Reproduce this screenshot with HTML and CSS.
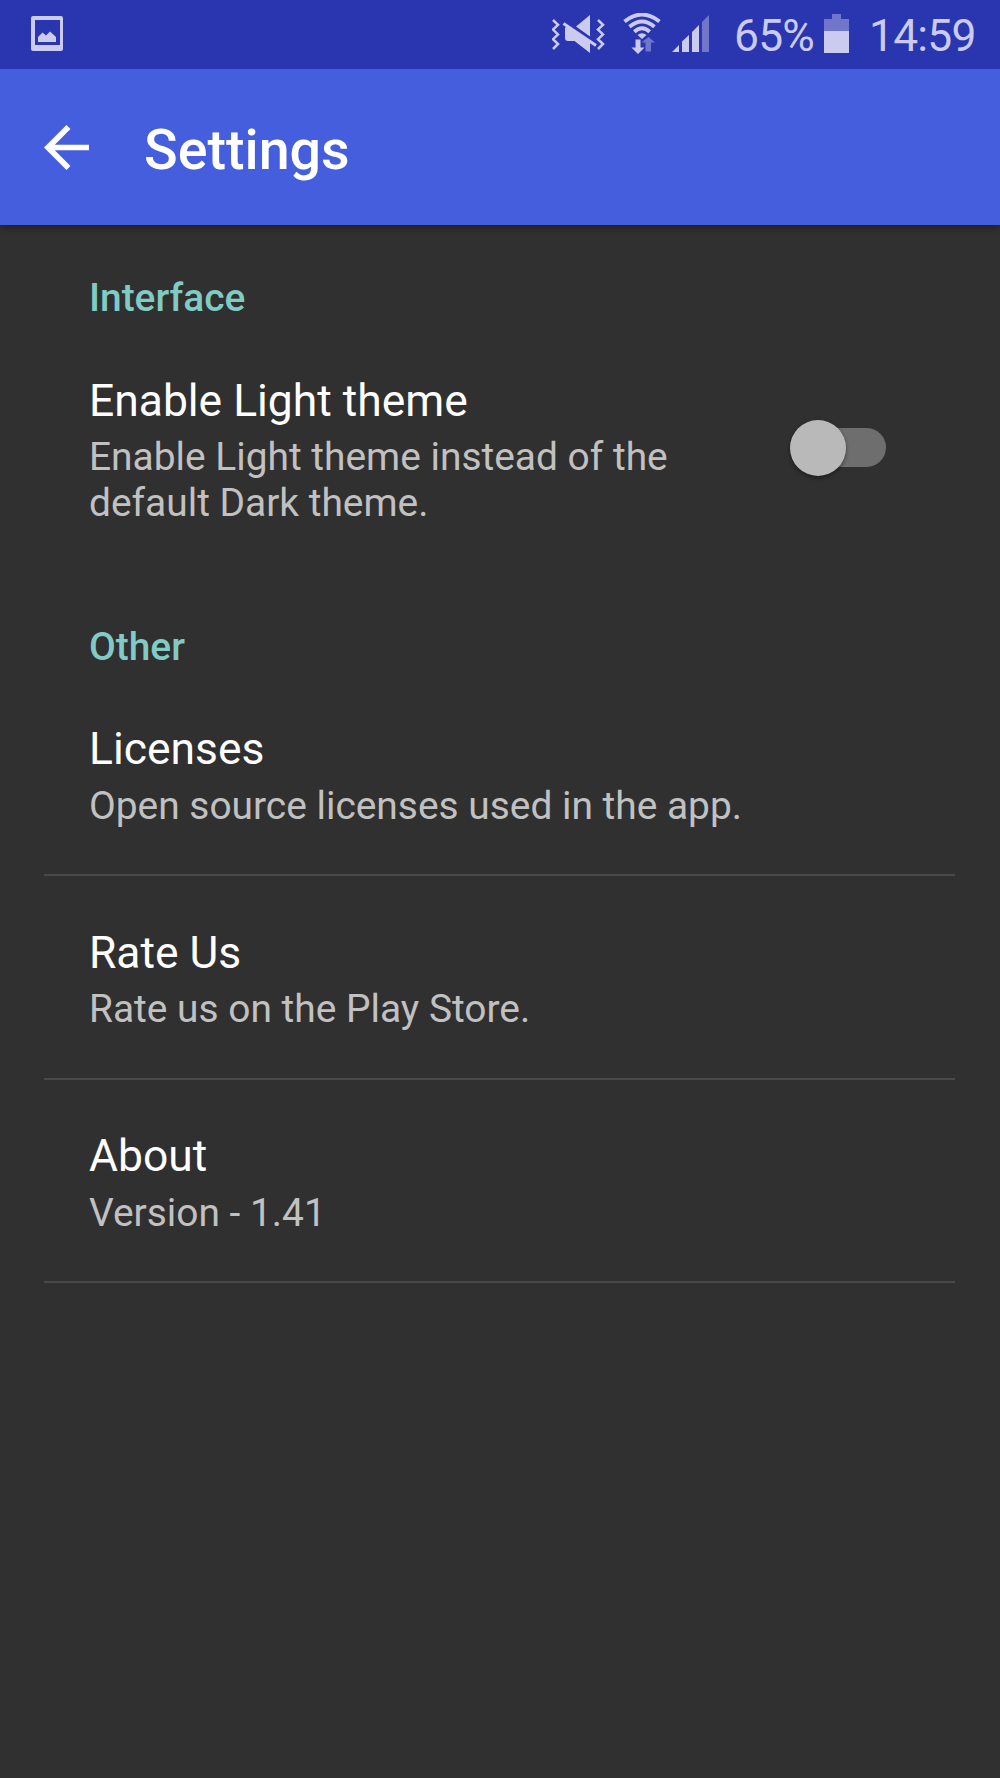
FILE: index.html
```html
<!DOCTYPE html>
<html lang="en">
<head>
    <meta charset="UTF-8">
    <meta name="viewport" content="width=device-width, initial-scale=1.0">
    <title>Settings</title>
    <link rel="stylesheet" href="styles.css">
</head>
<body>
    <div class="status-bar">
        <svg class="icon-picture" width="32" height="36" viewBox="0 0 32 36">
            <path fill-rule="evenodd" d="M2 0h28q2 0 2 2v31q0 2-2 2H2q-2 0-2-2V2q0-2 2-2zM4 4v25h25V4z"/>
            <path d="M7 26v-5l4.500-4.500 3.500 3L19 15.500l6 5.500v5z"/>
        </svg>
        <div class="status-right">
            <svg class="icon-mute" width="54" height="40" viewBox="0 0 54 40">
                <path class="wave" d="M1 5l5 4.800-5 4.800 5 4.800-5 4.800 5 4.800-5 5M46 5l5 4.800-5 4.800 5 4.800-5 4.800 5 4.800-5 5"/>
                <path d="M24 11.500L38 0v21.500zM15 11.500L38 27v11L22.500 26H16q-3 0-3-3v-9.500q0-2 2-2z"/>
                <path class="slash" d="M11.500 8.500L44 30.500"/>
            </svg>
            <svg class="icon-wifi" width="38" height="41" viewBox="0 0 38 41">
                <g class="arcs">
                    <path d="M1.500 8.500Q19-5.500 36.500 8.500"/>
                    <path d="M6.500 13.700Q19 3.300 31.500 13.700"/>
                    <path d="M11.300 18.700Q19 12 26.700 18.700"/>
                </g>
                <path d="M14.500 22q4.500-3.500 9 0L19 26z"/>
                <path d="M12.500 26.500h5v8h4L15 41l-6.500-6.500h4z"/>
                <path class="dim" d="M22.500 38.500v-9h-4L25.500 24l6.500 5.500h-4v9z"/>
            </svg>
            <svg class="icon-signal" width="38" height="38" viewBox="0 0 38 38">
                <path d="M0 37l7-7v7zM10 37V26.500l7-6.500v17zM20 37V17l7-7v27z"/>
                <path class="dim" d="M30 37V7l7-7v37z"/>
            </svg>
            <span class="battery-level">65%</span>
            <svg class="icon-battery" width="25" height="39" viewBox="0 0 25 39">
                <path class="dim" d="M8 0h9v5h8v12H0V5h8z"/>
                <path d="M0 17h25v22H0z"/>
            </svg>
            <span class="clock">14:59</span>
        </div>
    </div>

    <header class="toolbar">
        <svg class="back" width="45" height="45" viewBox="4 4 16 16">
            <path d="M20 11H7.830l5.590-5.590L12 4l-8 8 8 8 1.410-1.410L7.830 13H20v-2z"/>
        </svg>
        <h1>Settings</h1>
    </header>

    <main class="settings">
        <h2>Interface</h2>
        <div class="pref pref-switch">
            <div class="pref-text">
                <div class="title">Enable Light theme</div>
                <div class="summary">Enable Light theme instead of the default Dark theme.</div>
            </div>
            <div class="switch"><div class="thumb"></div></div>
        </div>

        <h2>Other</h2>
        <div class="pref">
            <div class="title">Licenses</div>
            <div class="summary">Open source licenses used in the app.</div>
        </div>
        <div class="pref">
            <div class="title">Rate Us</div>
            <div class="summary">Rate us on the Play Store.</div>
        </div>
        <div class="pref">
            <div class="title">About</div>
            <div class="summary">Version - 1.41</div>
        </div>
    </main>
</body>
</html>
```
FILE: styles.css
```css
* {
    margin: 0;
    padding: 0;
    box-sizing: border-box;
}

body {
    font-family: Roboto, sans-serif;
    background-color: #303030;
    color: #fff;
    min-height: 1778px;
}

svg {
    display: block;
    flex: none;
}

/* Status bar */
.status-bar {
    position: relative;
    z-index: 1;
    display: flex;
    justify-content: space-between;
    height: 69px;
    padding: 0 24px 0 31px;
    background-color: #2a35b0;
    color: #cacbef;
    fill: #cacbef;
}

.status-right {
    display: flex;
}

.dim {
    fill: #7077cb;
}

.icon-picture {
    margin-top: 16px;
}

.icon-mute {
    margin-top: 15px;
}

.wave {
    fill: none;
    stroke: #cacbef;
    stroke-width: 2.5;
}

.slash {
    stroke: #cacbef;
    stroke-width: 3;
}

.icon-wifi {
    margin: 13px 0 0 17px;
}

.arcs {
    fill: none;
    stroke: #cacbef;
    stroke-width: 3.8;
}

.icon-signal {
    margin: 15px 0 0 11px;
}

.battery-level,
.clock {
    font-size: 44.4px;
    line-height: 53px;
    margin-top: 10px;
    font-weight: 400;
    letter-spacing: -0.8px;
    white-space: nowrap;
}

.battery-level {
    width: 81px;
    margin-left: 24px;
}

.icon-battery {
    margin: 14px 0 0 9px;
}

.clock {
    width: 107px;
    margin-left: 20px;
}

/* Toolbar */
.toolbar {
    position: relative;
    display: flex;
    align-items: center;
    height: 156px;
    padding-left: 44px;
    background-color: #455ede;
    box-shadow: 0 2px 8px rgba(0, 0, 0, 0.4);
}

.back {
    fill: #fff;
}

.toolbar h1 {
    margin: 6px 0 0 55px;
    font-size: 55.6px;
    font-weight: 500;
    line-height: 65px;
}

/* Preferences */
.settings {
    padding: 49.5px 45px 0 44px;
}

.settings h2 {
    padding-left: 45px;
    font-size: 38.9px;
    font-weight: 500;
    line-height: 45.6px;
    color: #80cbc4;
}

.pref {
    padding: 50.4px 45px 46.2px;
    border-bottom: 2px solid #494949;
}

.settings h2 + .pref {
    padding-top: 54.2px;
}

.settings h2 + .pref-switch {
    padding-top: 55px;
}

.pref-switch {
    display: flex;
    align-items: center;
    justify-content: space-between;
    border-bottom: none;
}

.settings .pref-switch {
    padding-right: 69px;
    padding-bottom: 98px;
}

.pref-text {
    width: 620px;
}

.title {
    font-size: 44.4px;
    line-height: 52px;
}

.summary {
    margin-top: 7.3px;
    font-size: 38.9px;
    line-height: 45.6px;
    color: #c1c1c1;
}

/* Switch */
.switch {
    display: flex;
    align-items: center;
    width: 86px;
    height: 39px;
    margin-top: -5px;
    border-radius: 20px;
    background-color: #6e6e6e;
}

.thumb {
    flex: none;
    width: 56px;
    height: 56px;
    margin-left: -10px;
    border-radius: 50%;
    background-color: #b9b9b9;
    box-shadow: 0 2px 4px rgba(0, 0, 0, 0.4);
}
```
